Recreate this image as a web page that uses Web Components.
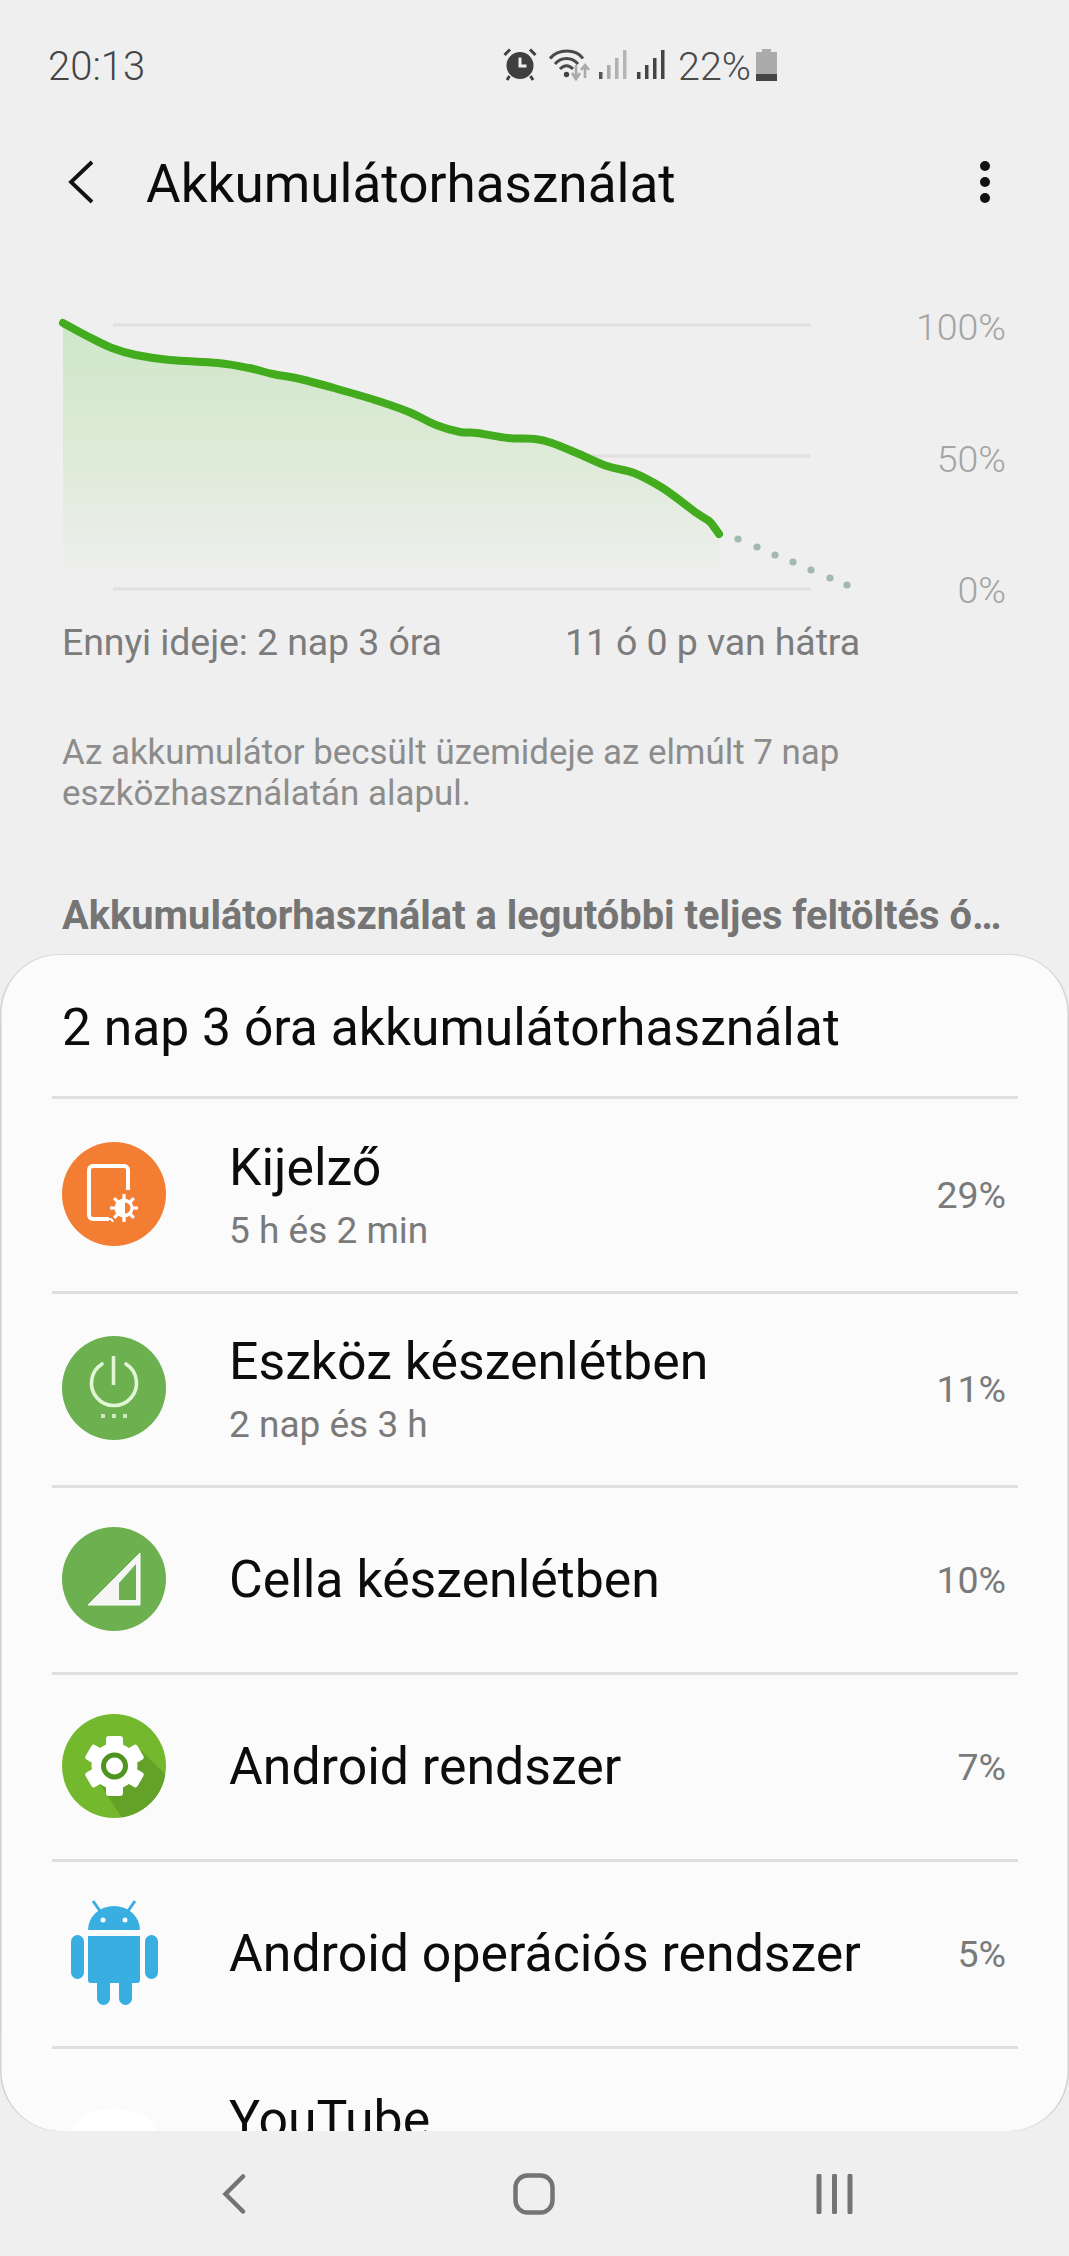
<!DOCTYPE html>
<html lang="hu"><head><meta charset="utf-8"><title>Akkumulátorhasználat</title>
<style>
html,body{margin:0;padding:0;background:#efefef}
body{width:1069px;height:2256px;overflow:hidden;font-family:Roboto,"Liberation Sans",sans-serif;display:flex;flex-direction:column}
</style></head><body>
<status-bar></status-bar>
<app-bar>Akkumulátorhasználat</app-bar>
<battery-chart></battery-chart>
<info-text>Az akkumulátor becsült üzemideje az elmúlt 7 nap<br>eszközhasználatán alapul.</info-text>
<section-title>Akkumulátorhasználat a legutóbbi teljes feltöltés óta</section-title>
<usage-sheet heading="2 nap 3 óra akkumulátorhasználat">
  <usage-row name="Kijelző" detail="5 h és 2 min" pct="29%" icon="display" h="195"></usage-row>
  <usage-row name="Eszköz készenlétben" detail="2 nap és 3 h" pct="11%" icon="power" h="194"></usage-row>
  <usage-row name="Cella készenlétben" pct="10%" icon="cell" h="187"></usage-row>
  <usage-row name="Android rendszer" pct="7%" icon="gear" h="187"></usage-row>
  <usage-row name="Android operációs rendszer" pct="5%" icon="android" h="187"></usage-row>
  <usage-row name="YouTube" icon="blank" h="195" last></usage-row>
</usage-sheet>
<nav-bar></nav-bar>
<script>
function el(name, html){
  customElements.define(name, class extends HTMLElement{
    constructor(){super();this.attachShadow({mode:'open'}).innerHTML=typeof html==='function'?html(this):html;}
  });
}
el('status-bar',`<style>
:host{display:flex;align-items:center;height:130px;box-sizing:border-box;padding:0 0 0 48px;flex:none;color:#454545;font-weight:300;font-size:40px}
.t{width:455px;position:relative;top:1px}
svg{display:block;flex:none}
.p{font-size:39.500px;margin:0 5px 0 13px;position:relative;top:1px;color:#4a4a4a}
</style>
<span class="t">20:13</span>
<svg width="34" height="34" viewBox="0 0 34 34"><circle cx="17" cy="17.500" r="13.500" fill="#3f3f3f"/><path d="M17 9.500v8.500h6.500" fill="none" stroke="#efefef" stroke-width="3"/><path d="M1.500 7 7 1.500M32.500 7 27 1.500M6.500 28 4 32M27.500 28 30 32" stroke="#3f3f3f" stroke-width="3" fill="none"/></svg>
<svg width="42" height="32" viewBox="0 0 42 32" style="margin:0 0 0 12px"><path d="M1 9.500C9-.5 27-.5 34 9.500M6 15C12 7.500 23 7.500 29 15M11 20C15 15.500 20 15.500 24 20" fill="none" stroke="#4a4a4a" stroke-width="3"/><circle cx="17.500" cy="25.500" r="2.700" fill="#444"/><path d="M27 16v13M23 24l4 6 4-6" fill="none" stroke="#a9a9a9" stroke-width="2.600"/><path d="M36 29V17M32 21l4-5 4 5" fill="none" stroke="#a9a9a9" stroke-width="2.600"/></svg>
<svg width="28" height="32" viewBox="0 0 28 32" style="margin:0 0 0 8px"><rect x="0" y="23" width="3.500" height="7" fill="#555"/><rect x="8" y="16" width="3.500" height="14" fill="#aaa"/><rect x="16" y="9" width="3.500" height="21" fill="#b0b0b0"/><rect x="24" y="1" width="3.500" height="29" fill="#b5b5b5"/></svg>
<svg width="28" height="32" viewBox="0 0 28 32" style="margin:0 0 0 10px"><rect x="0" y="23" width="3.500" height="7" fill="#444"/><rect x="8" y="16" width="3.500" height="14" fill="#444"/><rect x="16" y="9" width="3.500" height="21" fill="#444"/><rect x="24" y="1" width="3.500" height="29" fill="#444"/></svg>
<span class="p">22%</span>
<svg width="21" height="32" viewBox="0 0 21 32"><path d="M6 0h9v3h6v29H0V3h6z" fill="#ababab"/><path d="M0 25h21v7H0z" fill="#444"/></svg>`);

el('app-bar',`<style>
:host{display:flex;align-items:center;height:108px;margin-bottom:35px;flex:none;box-sizing:border-box;padding:0 0 0 66px;color:#0b0b0b;font-size:53.100px}
svg{display:block;flex:none;margin-bottom:4px}
.t{flex:none;width:832px;margin-left:52px;white-space:nowrap}
</style>
<svg width="28" height="44" viewBox="0 0 28 44"><path d="M26 2 5 22l21 20" fill="none" stroke="#111" stroke-width="3.800"/></svg>
<span class="t"><slot></slot></span>
<svg width="14" height="44" viewBox="0 0 14 44"><circle cx="7" cy="6" r="5" fill="#111"/><circle cx="7" cy="22" r="5" fill="#111"/><circle cx="7" cy="38" r="5" fill="#111"/></svg>`);

const line=[[63,323],[89,337],[112,348],[136,355],[170,360],[218,363],[249,368],[273,374],[300,379],[334,388],[375,400],[409,412],[436,425],[460,432],[477,433],[508,438],[535,439],[552,443],[579,454],[607,466],[634,473],[661,487],[682,502],[695,512],[709,521],[714,527],[719,534]];
let lp='M'+line[0].join(' ');
for(let i=0;i<line.length-1;i++){
  const p0=line[Math.max(i-1,0)],p1=line[i],p2=line[i+1],p3=line[Math.min(i+2,line.length-1)];
  const c1=[p1[0]+(p2[0]-p0[0])/6,p1[1]+(p2[1]-p0[1])/6],c2=[p2[0]-(p3[0]-p1[0])/6,p2[1]-(p3[1]-p1[1])/6];
  lp+=`C${c1[0].toFixed(1)} ${c1[1].toFixed(1)} ${c2[0].toFixed(1)} ${c2[1].toFixed(1)} ${p2[0]} ${p2[1]}`;
}
const dots=[[738,539],[757,547],[775,555],[793,562],[811,570],[830,578],[847,585]];

el('battery-chart',`<style>
:host{display:block;height:459px;flex:none;box-sizing:border-box;color:#7c7c7c}
.plot{display:flex;height:339px;padding-right:64px}
svg{display:block;flex:none}
.y{flex:1;display:flex;flex-direction:column;justify-content:space-between;align-items:flex-end;color:#a4a4a4;font-size:37.500px;font-weight:300;line-height:42px;padding:33px 0 1px;position:relative;left:1px}
.x{display:flex;justify-content:space-between;width:860px;box-sizing:border-box;padding:8px 0 0 62px;font-size:37.500px;font-weight:400;line-height:44px;white-space:nowrap;letter-spacing:-.1px}
</style>
<div class="plot">
<svg width="870" height="339" viewBox="0 0 870 339">
<defs><linearGradient id="g" x1="0" y1="0" x2="0" y2="1"><stop offset="0" stop-color="#cfe6c8"/><stop offset=".55" stop-color="#dfebd9"/><stop offset="1" stop-color="#efefef"/></linearGradient></defs>
<g transform="translate(0,-273)">
<path d="M113 325H810M113 456H810M113 589H810" stroke="#e0e0e0" stroke-width="3" fill="none"/>
<path d="${lp}L719 580L63 580Z" fill="url(#g)"/>
<path d="${lp}" fill="none" stroke="#42ac1e" stroke-width="8" stroke-linejoin="round" stroke-linecap="round"/>
${dots.map(d=>`<circle cx="${d[0]}" cy="${d[1]}" r="3.600" fill="#a3b7b5"/>`).join('')}
</g></svg>
<div class="y"><span>100%</span><span>50%</span><span>0%</span></div>
</div>
<div class="x"><span>Ennyi ideje: 2 nap 3 óra</span><span>11 ó 0 p van hátra</span></div>`);

el('info-text',`<style>
:host{display:block;flex:none;height:161px;box-sizing:border-box;padding:0 0 0 62px;color:#8c8c8c;font-size:34.900px;font-weight:400;line-height:41px}
</style><slot></slot>`);

el('section-title',`<style>
:host{display:block;flex:none;height:61px;box-sizing:border-box;padding:0 65px 0 62px;color:#757575;font-size:39.850px;font-weight:700;line-height:46px;white-space:nowrap}
div{overflow:hidden;text-overflow:ellipsis}
</style><div><slot></slot></div>`);

el('usage-sheet',h=>`<style>
:host{display:block;flex:none;height:1177px;box-sizing:border-box;background:#fbfbfb;border-radius:60px;overflow:hidden;box-shadow:inset 0 1px 0 #dcdcdc,inset 1.500px 0 0 #d0d0d0,inset -1.500px 0 0 #d0d0d0}
.h{height:142px;box-sizing:border-box;padding:46px 0 0 62px;font-size:51.600px;line-height:56px;color:#0c0c0c;white-space:nowrap}
.l{margin:0 51px 0 52px;border-top:3px solid #dfdfdf;height:0}
</style><div class="h">${h.getAttribute('heading')}</div><div class="l"></div><slot></slot>`);

const rays=[0,45,90,135,180,225,270,315].map(a=>`<path d="M62 66V52" stroke="#fff" stroke-width="3.200" transform="rotate(${a} 62 66)"/>`).join('');
const teeth=[0,60,120].map(a=>`<rect x="-8.500" y="-30" width="17" height="60" rx="3" transform="rotate(${a})"/>`).join('');
const icons={
display:`<circle cx="52" cy="52" r="52" fill="#f27d33"/><path d="M47 77H31a4 4 0 0 1-4-4V28a4 4 0 0 1 4-4h31a4 4 0 0 1 4 4v20" fill="none" stroke="#fff" stroke-width="4"/><path d="M47 77q3-.5 4 3" fill="none" stroke="#fff" stroke-width="2"/>${rays}<circle cx="62" cy="66" r="9.500" fill="#fff"/><path d="M63 60.500a5.500 5.500 0 0 1 0 11z" fill="#f27d33"/>`,
power:`<circle cx="52" cy="52" r="52" fill="#6db050"/><path d="M40 28a22.500 22.500 0 1 0 24 0" fill="none" stroke="#e2f6d6" stroke-width="3.600" stroke-linecap="round"/><path d="M51.500 20v29" stroke="#e2f6d6" stroke-width="3.600"/><g fill="#cfe8bf"><rect x="39" y="78" width="4" height="4"/><rect x="50" y="78" width="4" height="4"/><rect x="61" y="78" width="4" height="4"/></g>`,
cell:`<circle cx="52" cy="52" r="52" fill="#6db050"/><path d="M78 26v52H26z" fill="#f5f5f5"/><path d="M57 56 74 37v36H57z" fill="#6db050"/><path d="M78 26v52H26z" fill="none" stroke="#fff" stroke-width="1"/>`,
gear:`<defs><clipPath id="c"><circle cx="52" cy="52" r="52"/></clipPath></defs><circle cx="52" cy="52" r="52" fill="#74b82e"/><path d="M38 70 60 104 110 104 110 67 78 35z" fill="#64a128" clip-path="url(#c)"/><g fill="#fff" transform="translate(52.500,52)"><circle r="23"/>${teeth}</g><circle cx="52.500" cy="52" r="11" fill="#fff" stroke="#4f9320" stroke-width="5"/>`,
android:`<g fill="#39aee0"><path d="M26 29a26 24 0 0 1 52 0z"/><path d="M26 35h52v44a3 3 0 0 1-3 3H29a3 3 0 0 1-3-3z"/><rect x="9" y="34" width="13" height="44" rx="6.500"/><rect x="83" y="34" width="13" height="44" rx="6.500"/><rect x="35" y="70" width="13" height="34" rx="6.500"/><rect x="57" y="70" width="13" height="34" rx="6.500"/></g><path d="M31 0l7 10M73 0l-7 10" stroke="#39aee0" stroke-width="3"/><circle cx="41" cy="19" r="2.500" fill="#fbfbfb"/><circle cx="63" cy="19" r="2.500" fill="#fbfbfb"/>`,
blank:`<path d="M8 50C8 26 28 17 52 17s44 9 44 33z" fill="#fff"/>`
};
el('usage-row',h=>{
 const d=h.getAttribute('detail'),ic=h.getAttribute('icon'),row=+h.getAttribute('h'),last=h.hasAttribute('last'),pct=h.getAttribute('pct');
 return `<style>
:host{display:block}
.r{display:grid;grid-template-columns:104px 1fr auto;column-gap:63px;align-items:center;height:${row-3}px;box-sizing:border-box;padding:0 63px 3px 62px}
.n{font-size:51.800px;line-height:56px;color:#0c0c0c;white-space:nowrap}
.d{font-size:37px;line-height:42px;color:#7a7a7a;margin-top:14px;white-space:nowrap}
.p{font-size:37.500px;color:#7a7a7a;margin-top:2px}
.col{padding-top:${d?4:2}px;${last?'align-self:start;padding-top:43px':''}}
svg{display:block;overflow:visible}
.l{margin:0 51px 0 52px;border-top:3px solid #dfdfdf}
</style>
<div class="r"><svg width="104" height="104" viewBox="0 0 104 104">${icons[ic]}</svg>
<div class="col"><div class="n">${h.getAttribute('name')}</div>${d?`<div class="d">${d}</div>`:''}</div>
${pct?`<div class="p">${pct}</div>`:''}</div>${last?'':'<div class="l"></div>'}`;
});
el('nav-bar',`<style>
:host{display:flex;flex:1;align-items:center;box-sizing:border-box;padding:0 0 0 222px}
svg{display:block;flex:none}
</style>
<svg width="24" height="40" viewBox="0 0 24 40"><path d="M21 2.500 3.500 20 21 37.500" fill="none" stroke="#747474" stroke-width="4.500" stroke-linecap="round"/></svg>
<svg width="42" height="42" viewBox="0 0 42 42" style="margin-left:267px"><rect x="2.500" y="2.500" width="37" height="37" rx="12" fill="none" stroke="#747474" stroke-width="4.500"/></svg>
<svg width="38" height="40" viewBox="0 0 38 40" style="margin-left:261px"><path d="M3 2v36M18.500 2v36M34 2v36" stroke="#747474" stroke-width="5" stroke-linecap="round"/></svg>`);
</script>
</body></html>
